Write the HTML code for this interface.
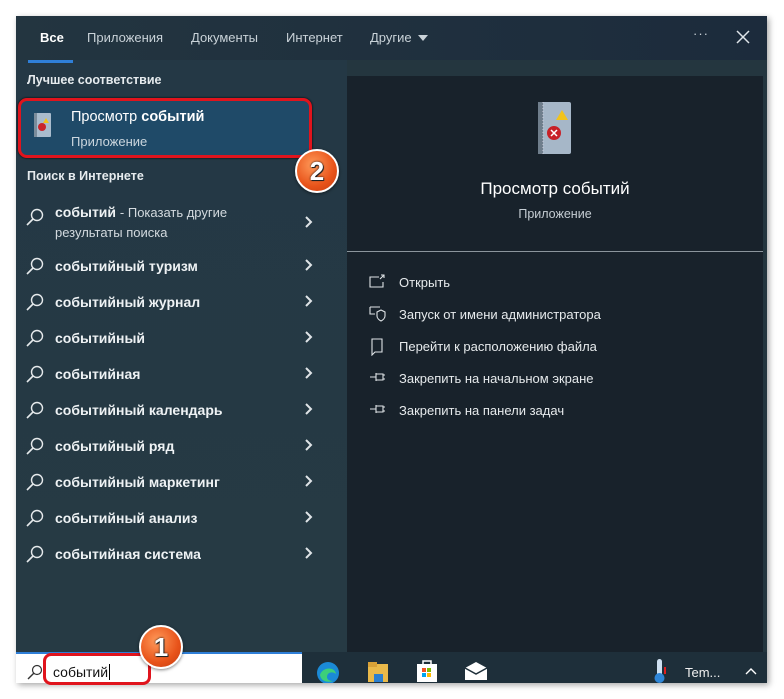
<!DOCTYPE html>
<html><head><meta charset="utf-8"><style>
*{margin:0;padding:0;box-sizing:border-box}
body{width:784px;height:699px;background:#fff;position:relative;overflow:hidden;font-family:"Liberation Sans","DejaVu Sans",sans-serif;color:#fff}
.win{position:absolute;left:16px;top:16px;width:751px;height:667px;background:#24363f;box-shadow:2px 2px 6px rgba(0,0,0,.35)}
.hdr{position:absolute;left:0;top:0;width:751px;height:44px;background:linear-gradient(90deg,#233540,#1c2b3c)}
.tab{position:absolute;top:14px;font-size:13px;color:#c9d2d8}
.left{position:absolute;left:0;top:44px;width:331px;height:592px;background:linear-gradient(180deg,#243845,#263a44)}
.right{position:absolute;left:331px;top:60px;width:416px;height:576px;background:#18222b}
.t{position:absolute;white-space:nowrap}
.item{position:absolute;left:10px;height:36px;width:289px;font-size:14px;font-weight:bold;color:#eef2f4}
.item svg.s{position:absolute;left:0;top:8px}
.item span{position:absolute;left:29px;top:9px}
.item .ch{position:absolute;right:2px;top:10px;left:auto}
.act{position:absolute;left:22px;font-size:13px;color:#e6eaec}
.act svg{position:absolute;left:0;top:-1px}
.act span{position:absolute;left:30px;white-space:nowrap}
.tb{position:absolute;left:0;top:636px;width:751px;height:31px;background:#1e2f3a}
.badge{position:absolute;width:44px;height:44px;border-radius:50%;background:radial-gradient(circle at 40% 35%,#ff9a5a,#e8531a 60%,#c23b10);border:2px solid #fff;box-shadow:0 1px 3px rgba(0,0,0,.5);font:bold 26px "Liberation Sans",sans-serif;color:#fff;text-align:center;line-height:40px;text-shadow:0 0 2px #000,1px 1px 0 #333}
</style></head><body>
<div class="win">
 <div class="hdr">
  <div class="tab" style="left:24px;color:#fff;font-weight:bold">Все</div>
  <div style="position:absolute;left:12px;top:44px;width:45px;height:3px;background:#2f7fd8;z-index:3"></div>
  <div class="tab" style="left:71px">Приложения</div>
  <div class="tab" style="left:175px">Документы</div>
  <div class="tab" style="left:270px">Интернет</div>
  <div class="tab" style="left:354px">Другие</div>
  <svg style="position:absolute;left:402px;top:19px" width="10" height="6"><path d="M0 0H10L5 6Z" fill="#c9d2d8"/></svg>
  <div class="tab" style="left:677px;top:10px;letter-spacing:1px">···</div>
  <svg style="position:absolute;left:720px;top:14px" width="14" height="14"><path d="M1 1L13 13M13 1L1 13" stroke="#dfe5e9" stroke-width="1.5"/></svg>
 </div>
 <div class="left">
  <div class="t" style="left:11px;top:13px;font-size:12.5px;font-weight:bold;color:#e6ebee">Лучшее соответствие</div>
  <div style="position:absolute;left:2px;top:38px;width:294px;height:60px;background:#1f4a68;border:3px solid #e0141d;border-radius:9px;box-shadow:0 0 2px #000"></div>
  <svg style="position:absolute;left:17px;top:52px" width="20" height="26"><rect x="2" y="1" width="16" height="24" rx="1" fill="#a9bccd"/><rect x="1" y="1" width="3" height="24" fill="#7a8c9b"/><circle cx="9" cy="15" r="4" fill="#c9262c"/><path d="M13 6l3 5h-6z" fill="#f2c21b"/></svg>
  <div class="t" style="left:55px;top:49px;font-size:14.5px">Просмотр <b>событий</b></div>
  <div class="t" style="left:55px;top:74px;font-size:13px;color:#cbd6de">Приложение</div>
  <div class="t" style="left:11px;top:109px;font-size:12.5px;font-weight:bold;color:#e6ebee">Поиск в Интернете</div>
  <div class="item" style="top:140px;height:44px">
   <svg class="s" width="18" height="18"><circle cx="11" cy="7" r="5.5" fill="none" stroke="#e6eaec" stroke-width="1.4"/><path d="M7 11L1 17" stroke="#e6eaec" stroke-width="1.6"/></svg>
   <span style="top:4px"><b>событий</b> <span style="position:static;font-weight:normal;font-size:13px;color:#d3dadf">- Показать другие</span></span>
   <span style="top:25px;font-weight:normal;font-size:13px;color:#d3dadf">результаты поиска</span>
   <svg class="ch" style="top:16px" width="8" height="12"><path d="M1 1L6 6L1 11" fill="none" stroke="#dfe4e7" stroke-width="2"/></svg>
  </div>
 </div>
 <div class="right">
  <svg style="position:absolute;left:189px;top:24px" width="38" height="56"><rect x="4" y="2" width="31" height="52" rx="2" fill="#a6b7c8"/><rect x="2" y="2" width="5" height="52" fill="#6f7e8c"/><path d="M7 2v52" stroke="#ccd" stroke-dasharray="1 2"/><circle cx="18" cy="33" r="7" fill="#c82027"/><path d="M15 30l6 6M21 30l-6 6" stroke="#fff" stroke-width="1.5"/><path d="M26 10l6 10h-12z" fill="#f1c31c"/></svg>
  <div class="t" style="left:0;width:416px;text-align:center;top:103px;font-size:17px">Просмотр событий</div>
  <div class="t" style="left:0;width:416px;text-align:center;top:131px;font-size:12.5px;color:#c5cdd3">Приложение</div>
  <div style="position:absolute;left:0;top:175px;width:416px;height:1px;background:#8b959c"></div>
 </div>
 <div class="tb"></div>
 <div style="position:absolute;left:0;top:636px;width:286px;height:31px;background:#fff;border-top:2px solid #2f7fd8"></div>
 <svg style="position:absolute;left:11px;top:648px" width="16" height="16"><circle cx="10" cy="6" r="4.5" fill="none" stroke="#333" stroke-width="1.2"/><path d="M7 9L1 15" stroke="#333" stroke-width="1.4"/></svg>
 <div class="t" style="left:37px;top:648px;font-size:14px;color:#111">событий<span style="border-left:1px solid #000;margin-left:1px"></span></div>
 <div style="position:absolute;left:27px;top:637px;width:108px;height:32px;border:3px solid #e0141d;border-radius:8px"></div>
 <svg style="position:absolute;left:300px;top:645px" width="24" height="22"><circle cx="12" cy="12" r="11" fill="#1b8ad6"/><path d="M4 14c2-8 15-9 16-1-3-3-9-2-9 3 0 3 3 4 6 4-6 2-12 0-13-6z" fill="#3ccf7a"/></svg>
 <svg style="position:absolute;left:351px;top:645px" width="22" height="22"><rect x="1" y="3" width="20" height="18" fill="#e9b94a"/><rect x="1" y="1" width="9" height="5" fill="#d8a137"/><rect x="7" y="13" width="9" height="8" fill="#2b7fd0"/></svg>
 <svg style="position:absolute;left:400px;top:642px" width="22" height="25"><rect x="1" y="6" width="20" height="18" fill="#fff"/><path d="M7 6V3h8v3" fill="none" stroke="#fff" stroke-width="1.5"/><rect x="6" y="10" width="4" height="4" fill="#f25022"/><rect x="11" y="10" width="4" height="4" fill="#7fba00"/><rect x="6" y="15" width="4" height="4" fill="#00a4ef"/><rect x="11" y="15" width="4" height="4" fill="#ffb900"/></svg>
 <svg style="position:absolute;left:448px;top:645px" width="24" height="20"><path d="M1 7L12 1L23 7V19H1Z" fill="#fff"/><path d="M1 7L12 13L23 7" fill="none" stroke="#1e2f3a" stroke-width="1.5"/></svg>
 <svg style="position:absolute;left:637px;top:642px" width="14" height="26"><rect x="4" y="1" width="5" height="18" rx="2.5" fill="#cfe0f0"/><circle cx="6.5" cy="20" r="5" fill="#2e86d8"/><rect x="11" y="9" width="2" height="7" fill="#e02020"/></svg>
 <div class="t" style="left:669px;top:649px;font-size:13px;color:#f0f0f0">Tem...</div>
 <svg style="position:absolute;left:729px;top:651px" width="12" height="8"><path d="M1 7L6 2L11 7" fill="none" stroke="#fff" stroke-width="1.4"/></svg>
</div>
<div class="badge" style="left:295px;top:149px">2</div>
<div class="badge" style="left:139px;top:625px">1</div>
<div style="position:absolute;left:0;top:0">
 <div class="item" style="position:absolute;left:26px;top:249px"><svg class="s" width="18" height="18"><circle cx="11" cy="7" r="5.5" fill="none" stroke="#e6eaec" stroke-width="1.4"/><path d="M7 11L1 17" stroke="#e6eaec" stroke-width="1.6"/></svg><span>событийный туризм</span><svg class="ch" width="8" height="12"><path d="M1 1L6 6L1 11" fill="none" stroke="#dfe4e7" stroke-width="2"/></svg></div>
 <div class="item" style="position:absolute;left:26px;top:285px"><svg class="s" width="18" height="18"><circle cx="11" cy="7" r="5.5" fill="none" stroke="#e6eaec" stroke-width="1.4"/><path d="M7 11L1 17" stroke="#e6eaec" stroke-width="1.6"/></svg><span>событийный журнал</span><svg class="ch" width="8" height="12"><path d="M1 1L6 6L1 11" fill="none" stroke="#dfe4e7" stroke-width="2"/></svg></div>
 <div class="item" style="position:absolute;left:26px;top:321px"><svg class="s" width="18" height="18"><circle cx="11" cy="7" r="5.5" fill="none" stroke="#e6eaec" stroke-width="1.4"/><path d="M7 11L1 17" stroke="#e6eaec" stroke-width="1.6"/></svg><span>событийный</span><svg class="ch" width="8" height="12"><path d="M1 1L6 6L1 11" fill="none" stroke="#dfe4e7" stroke-width="2"/></svg></div>
 <div class="item" style="position:absolute;left:26px;top:357px"><svg class="s" width="18" height="18"><circle cx="11" cy="7" r="5.5" fill="none" stroke="#e6eaec" stroke-width="1.4"/><path d="M7 11L1 17" stroke="#e6eaec" stroke-width="1.6"/></svg><span>событийная</span><svg class="ch" width="8" height="12"><path d="M1 1L6 6L1 11" fill="none" stroke="#dfe4e7" stroke-width="2"/></svg></div>
 <div class="item" style="position:absolute;left:26px;top:393px"><svg class="s" width="18" height="18"><circle cx="11" cy="7" r="5.5" fill="none" stroke="#e6eaec" stroke-width="1.4"/><path d="M7 11L1 17" stroke="#e6eaec" stroke-width="1.6"/></svg><span>событийный календарь</span><svg class="ch" width="8" height="12"><path d="M1 1L6 6L1 11" fill="none" stroke="#dfe4e7" stroke-width="2"/></svg></div>
 <div class="item" style="position:absolute;left:26px;top:429px"><svg class="s" width="18" height="18"><circle cx="11" cy="7" r="5.5" fill="none" stroke="#e6eaec" stroke-width="1.4"/><path d="M7 11L1 17" stroke="#e6eaec" stroke-width="1.6"/></svg><span>событийный ряд</span><svg class="ch" width="8" height="12"><path d="M1 1L6 6L1 11" fill="none" stroke="#dfe4e7" stroke-width="2"/></svg></div>
 <div class="item" style="position:absolute;left:26px;top:465px"><svg class="s" width="18" height="18"><circle cx="11" cy="7" r="5.5" fill="none" stroke="#e6eaec" stroke-width="1.4"/><path d="M7 11L1 17" stroke="#e6eaec" stroke-width="1.6"/></svg><span>событийный маркетинг</span><svg class="ch" width="8" height="12"><path d="M1 1L6 6L1 11" fill="none" stroke="#dfe4e7" stroke-width="2"/></svg></div>
 <div class="item" style="position:absolute;left:26px;top:501px"><svg class="s" width="18" height="18"><circle cx="11" cy="7" r="5.5" fill="none" stroke="#e6eaec" stroke-width="1.4"/><path d="M7 11L1 17" stroke="#e6eaec" stroke-width="1.6"/></svg><span>событийный анализ</span><svg class="ch" width="8" height="12"><path d="M1 1L6 6L1 11" fill="none" stroke="#dfe4e7" stroke-width="2"/></svg></div>
 <div class="item" style="position:absolute;left:26px;top:537px"><svg class="s" width="18" height="18"><circle cx="11" cy="7" r="5.5" fill="none" stroke="#e6eaec" stroke-width="1.4"/><path d="M7 11L1 17" stroke="#e6eaec" stroke-width="1.6"/></svg><span>событийная система</span><svg class="ch" width="8" height="12"><path d="M1 1L6 6L1 11" fill="none" stroke="#dfe4e7" stroke-width="2"/></svg></div>
 <div class="act" style="position:absolute;left:369px;top:275px"><svg width="18" height="16"><path d="M10 3H1V13H14V8M12 1l3 0 0 3M15 1l-4 4" fill="none" stroke="#dfe4e7" stroke-width="1.1"/></svg><span>Открыть</span></div>
 <div class="act" style="position:absolute;left:369px;top:307px"><svg width="18" height="16"><path d="M1 1H11M1 1V8H6" fill="none" stroke="#dfe4e7" stroke-width="1.1"/><path d="M8 6l4-2 4 2v4c0 2-2 4-4 5-2-1-4-3-4-5z" fill="none" stroke="#dfe4e7" stroke-width="1.1"/></svg><span>Запуск от имени администратора</span></div>
 <div class="act" style="position:absolute;left:369px;top:339px"><svg width="18" height="18"><path d="M3 1H13V14H6L3 17Z M3 1V17" fill="none" stroke="#dfe4e7" stroke-width="1.1"/></svg><span>Перейти к расположению файла</span></div>
 <div class="act" style="position:absolute;left:369px;top:371px"><svg width="18" height="16"><path d="M1 7H7M7 3V11M7 4H14V10H7M14 5H16M14 9H16" fill="none" stroke="#dfe4e7" stroke-width="1.1"/></svg><span>Закрепить на начальном экране</span></div>
 <div class="act" style="position:absolute;left:369px;top:403px"><svg width="18" height="16"><path d="M1 7H7M7 3V11M7 4H14V10H7M14 5H16M14 9H16" fill="none" stroke="#dfe4e7" stroke-width="1.1"/></svg><span>Закрепить на панели задач</span></div>
</div>
</body></html>
